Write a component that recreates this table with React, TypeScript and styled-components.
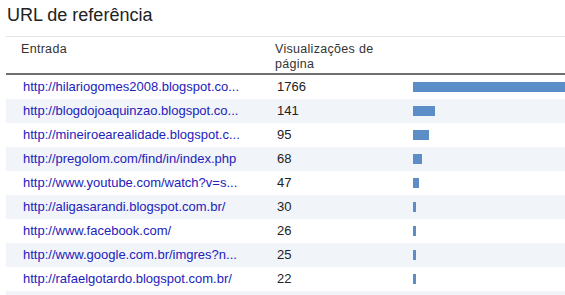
import React, { FC } from "react";
import styled, { createGlobalStyle } from "styled-components";

const GlobalStyle = createGlobalStyle`
  body {
    margin: 0;
    background: #fff;
    font-family: "Liberation Sans", Arial, sans-serif;
  }
`;

const Page = styled.div`
  width: 565px;
  height: 295px;
  overflow: hidden;
`;

const Title = styled.h2`
  margin: 0 0 11px;
  padding: 5px 0 0 7px;
  font-size: 18px;
  line-height: 20px;
  font-weight: normal;
  color: #222;
`;

const Table = styled.div`
  margin-left: 6px;
  border-top: 1px solid #e5e5e5;
`;

const HeaderRow = styled.div`
  display: grid;
  grid-template-columns: 254px 136px 1fr;
  height: 38px;
  box-sizing: border-box;
  padding: 5px 0 0 15px;
  border-bottom: 2px solid #6e6e6e;
  font-size: 12.5px;
  letter-spacing: 0.3px;
  line-height: 14.5px;
  color: #333;
`;

const HeaderCell = styled.div``;

const Row = styled.div<{ $shaded: boolean }>`
  display: grid;
  grid-template-columns: 254px 136px 1fr;
  align-items: start;
  height: 24px;
  padding-left: 17px;
  background: ${(p) => (p.$shaded ? "#f1f4f9" : "#fff")};
  font-size: 13px;
  line-height: 24px;
`;

const Link = styled.a`
  color: #2222bb;
  text-decoration: none;
  white-space: nowrap;
`;

const Count = styled.span`
  color: #222;
`;

const BarCell = styled.div`
  height: 24px;
  display: flex;
  align-items: center;
  overflow: hidden;
`;

const Bar = styled.div`
  height: 10px;
  background: #5b8ec6;
  flex-shrink: 0;
`;

interface IEntry {
  url: string;
  views: number;
  bar: number;
}

const entries: IEntry[] = [
  { url: "http://hilariogomes2008.blogspot.co...", views: 1766, bar: 280 },
  { url: "http://blogdojoaquinzao.blogspot.co...", views: 141, bar: 22 },
  { url: "http://mineiroearealidade.blogspot.c...", views: 95, bar: 16 },
  { url: "http://pregolom.com/find/in/index.php", views: 68, bar: 9 },
  { url: "http://www.youtube.com/watch?v=s...", views: 47, bar: 6 },
  { url: "http://aligasarandi.blogspot.com.br/", views: 30, bar: 3 },
  { url: "http://www.facebook.com/", views: 26, bar: 3 },
  { url: "http://www.google.com.br/imgres?n...", views: 25, bar: 3 },
  { url: "http://rafaelgotardo.blogspot.com.br/", views: 22, bar: 3 },
];

const App: FC = () => (
  <>
    <GlobalStyle />
    <Page>
      <Title>URL de referência</Title>
      <Table>
        <HeaderRow>
          <HeaderCell>Entrada</HeaderCell>
          <HeaderCell>
            Visualizações de
            <br />
            página
          </HeaderCell>
          <HeaderCell />
        </HeaderRow>
        {entries.map((e, i) => (
          <Row key={e.url} $shaded={i % 2 === 1}>
            <Link href="#">{e.url}</Link>
            <Count>{e.views}</Count>
            <BarCell>
              <Bar style={{ width: e.bar }} />
            </BarCell>
          </Row>
        ))}
        <Row $shaded />
      </Table>
    </Page>
  </>
);

export default App;
